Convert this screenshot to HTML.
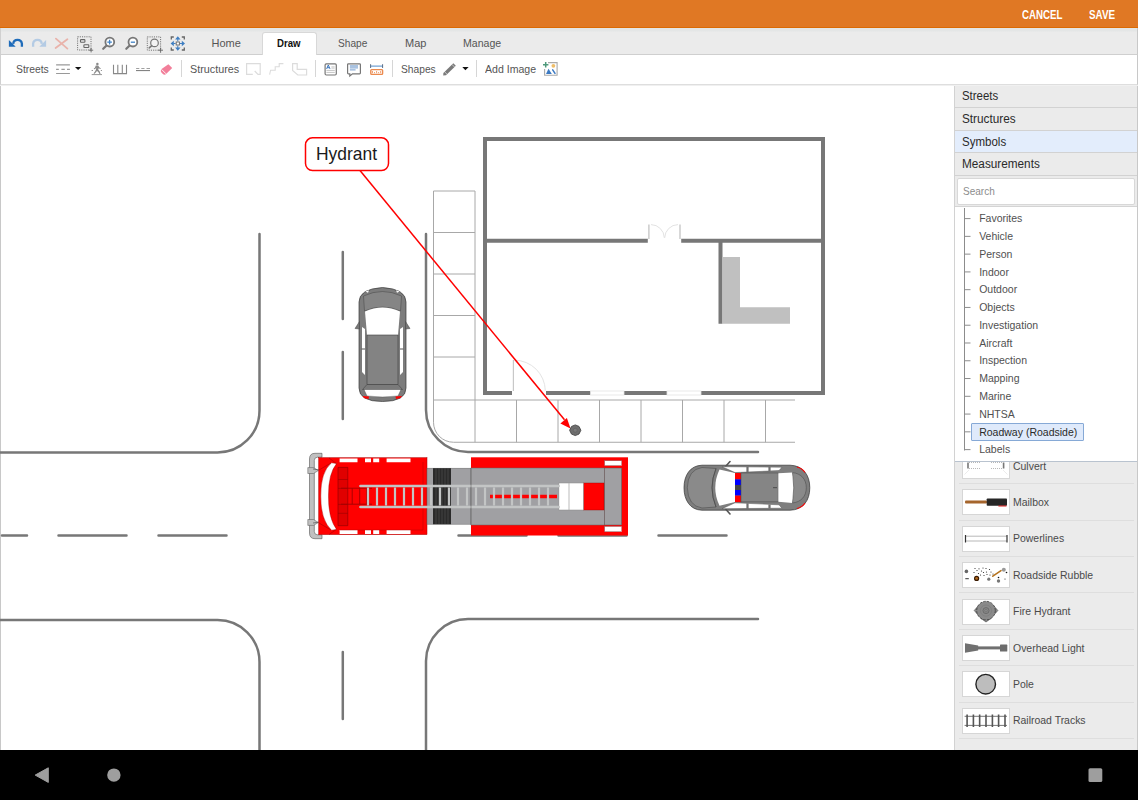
<!DOCTYPE html>
<html><head><meta charset="utf-8">
<style>
*{box-sizing:border-box}
html,body{margin:0;padding:0;width:1138px;height:800px;overflow:hidden;background:#fff;font-family:"Liberation Sans",sans-serif}
.abs{position:absolute}
#topbar{position:absolute;left:0;top:0;width:1138px;height:28px;background:#e07824;border-bottom:1.2px solid #dc6a02}
#topbar .btn{position:absolute;color:#fff;font-weight:bold;font-size:12px;line-height:12px;top:8.6px}
#tabbar{position:absolute;left:0;top:28px;width:1138px;height:27px;background:linear-gradient(#e4e6e6 0,#e4e6e6 3px,#ebebeb 4px);border-bottom:1px solid #cfcfcf;border-left:1px solid #d0d0d0;border-right:1px solid #c8c8c8}
.tab{position:absolute;font-size:11px;line-height:11px;color:#555;top:9.7px}
#drawtab{position:absolute;left:260.5px;top:4px;width:55px;height:23px;background:#fff;border:1px solid #d8d8d8;border-bottom:none;border-radius:3px 3px 0 0}
#toolbar{position:absolute;left:0;top:55px;width:1138px;height:30px;background:#fff;border-bottom:1px solid #dedede;box-shadow:0 1px 0 #f0f0f0;z-index:1;border-left:1px solid #d0d0d0;border-right:1px solid #c8c8c8}
.tl{position:absolute;font-size:11px;line-height:11px;color:#555;top:8.7px}
.sep{position:absolute;top:5px;width:1px;height:17px;background:#d6d6d6}
#canvas{position:absolute;left:0;top:85px;width:954px;height:665px;background:#fff;border-left:1px solid #c8c8c8}
#panel{position:absolute;left:954px;top:85px;width:184px;height:665px;background:#ebebeb;border-left:1px solid #d2d2d2;border-right:1px solid #c8c8c8}
.hdr{position:absolute;left:955px;width:182px;border-bottom:1px solid #d2d2d2;background:#ebebeb}
.hdr span{position:absolute;left:7.2px;font-size:12px;line-height:12px;color:#2a2a2a}
#searchwrap{position:absolute;left:955px;top:176px;width:182px;height:31px;background:#ebebeb;border-bottom:1px solid #d4d4d4}
#search{position:absolute;left:2px;top:2px;width:177.5px;height:26.5px;background:#fff;border:1px solid #d8d8d8;border-radius:2px}
#search span{position:absolute;left:5px;top:7px;font-size:11px;line-height:11px;color:#8c8c8c;transform:scaleX(.91);transform-origin:0 0}
#tree{position:absolute;left:955px;top:206px;width:182px;height:256px;background:#fff;border-top:1px solid #d4d4d4;border-bottom:1px solid #b9c3cf}
.ti{position:absolute;left:24.2px;font-size:10.5px;line-height:10.5px;color:#505050;margin-top:-207px}
#hl{position:absolute;left:16.25px;top:216.25px;width:112.5px;height:17.8px;background:#dfeafb;border:1px solid #86a9d6;border-radius:1px}
.lsep{position:absolute;left:958.5px;width:175px;height:1px;background:#dedede}
.thumb{position:absolute;left:962.3px;width:47.4px;height:26px;background:#fff;border:1px solid #d6d6d6}
.li{position:absolute;left:1013.2px;font-size:11px;line-height:11px;color:#4a4a4a;transform:scaleX(.95);transform-origin:0 0}
#navbar{position:absolute;left:0;top:750px;width:1138px;height:50px;background:#000}
</style></head><body>
<div id="topbar">
  <span class="btn" style="left:1022.4px;transform:scaleX(.81);transform-origin:0 0">CANCEL</span>
  <span class="btn" style="left:1089.3px;transform:scaleX(.82);transform-origin:0 0">SAVE</span>
</div>
<div id="tabbar">
  <div id="drawtab"></div>
  <span class="tab" style="left:210.5px">Home</span>
  <span class="tab" style="left:276px;color:#111;font-weight:bold;transform:scaleX(.875);transform-origin:0 0">Draw</span>
  <span class="tab" style="left:336.5px;transform:scaleX(.92);transform-origin:0 0">Shape</span>
  <span class="tab" style="left:404px">Map</span>
  <span class="tab" style="left:462.2px;transform:scaleX(.96);transform-origin:0 0">Manage</span>
</div>
<div id="toolbar">
  <span class="tl" style="left:14.5px;transform:scaleX(.94);transform-origin:0 0">Streets</span>
  <div class="sep" style="left:180px"></div>
  <span class="tl" style="left:189px;transform:scaleX(.98);transform-origin:0 0">Structures</span>
  <div class="sep" style="left:314px"></div>
  <div class="sep" style="left:391px"></div>
  <span class="tl" style="left:400px;transform:scaleX(.93);transform-origin:0 0">Shapes</span>
  <div class="sep" style="left:475px"></div>
  <span class="tl" style="left:484.4px;transform:scaleX(.96);transform-origin:0 0">Add Image</span>
</div>
<svg width="600" height="57" viewBox="0 28 600 57" style="position:absolute;left:0;top:28px;z-index:2">
<!-- undo -->
<path d="M13.2 43.8A4.4 4.4 0 0 1 21.9 43.6V46.8" fill="none" stroke="#1f6cba" stroke-width="2.3"/>
<path d="M8.9 40.1V46.8H15.7Z" fill="#1f6cba"/>
<!-- redo -->
<path d="M41.8 43.8A4.4 4.4 0 0 0 33.1 43.6V46.8" fill="none" stroke="#b4cbe4" stroke-width="2.3"/>
<path d="M46.1 40.1V46.8H39.3Z" fill="#b4cbe4"/>
<!-- x -->
<path d="M55.9 38.6L67.4 48.6M67.4 39.2L55.6 48" stroke="#e9b3ab" stroke-width="1.8" stroke-linecap="round"/>
<!-- select -->
<rect x="77.6" y="36.8" width="13.4" height="13.2" fill="none" stroke="#666" stroke-width="0.9" stroke-dasharray="1.1 1.1"/>
<rect x="80.5" y="39.6" width="4.4" height="2.7" rx="0.6" fill="none" stroke="#666" stroke-width="1.1"/>
<rect x="83.9" y="44.8" width="4.9" height="2.7" rx="0.6" fill="none" stroke="#666" stroke-width="1.1"/>
<path d="M89 50.2H93.2M91.1 48V52.4" stroke="#666" stroke-width="0.9"/>
<!-- zoom in -->
<circle cx="109.8" cy="42.1" r="4.4" fill="#fff" stroke="#777" stroke-width="1.8"/>
<path d="M106.3 45.8L103.2 48.8" stroke="#777" stroke-width="2.2" stroke-linecap="round"/>
<path d="M109.6 39.8V44.6M107.3 42.2H111.9" stroke="#3f82c6" stroke-width="1.3"/>
<!-- zoom out -->
<circle cx="132.9" cy="42.1" r="4.4" fill="#fff" stroke="#777" stroke-width="1.8"/>
<path d="M129.4 45.8L126.3 48.8" stroke="#777" stroke-width="2.2" stroke-linecap="round"/>
<path d="M130.8 42.2H135" stroke="#3f82c6" stroke-width="1.3"/>
<!-- zoom rect -->
<rect x="147.3" y="36.9" width="13.3" height="13.3" fill="none" stroke="#666" stroke-width="0.9" stroke-dasharray="1.1 1.1"/>
<circle cx="154.5" cy="42.9" r="3.8" fill="#f4f4f4" stroke="#777" stroke-width="1.2"/>
<path d="M151.8 45.6L149.2 47.9" stroke="#777" stroke-width="1.5" stroke-linecap="round"/>
<path d="M158.2 50.2H163M160.6 47.8V52.8" stroke="#666" stroke-width="0.9"/>
<!-- fit -->
<path d="M171.3 39.5V37H173.8M181.8 37H184.3V39.5M184.3 47.5V50H181.8M173.8 50H171.3V47.5" fill="none" stroke="#666" stroke-width="1.3"/>
<path d="M177.8 36.2L180.5 39.4H175.1Z M177.8 50.8L180.5 47.6H175.1Z M170.6 43.5L173.8 40.8V46.2Z M185 43.5L181.8 40.8V46.2Z" fill="#3f7fc2"/>
<path d="M177.8 39V41.3M177.8 45.7V48M173.3 43.5H175.6M180 43.5H182.3" stroke="#3f7fc2" stroke-width="1"/>
<rect x="176.2" y="42" width="3.2" height="3" fill="#fff" stroke="#666" stroke-width="0.9"/>
<!-- row 2: dashed road -->
<path d="M56.1 64.8H69.9M56.1 73.5H69.9" stroke="#999" stroke-width="1.2"/>
<path d="M56.1 69.4H58.8M61.4 69.4H64.8M67 69.4H69.9" stroke="#999" stroke-width="1.1"/>
<path d="M75 67H81.3L78.1 70Z" fill="#111"/>
<!-- pedestrian -->
<g fill="#8a8a8a">
<circle cx="97.4" cy="63.9" r="1.25"/>
<path d="M95.8 65.6L98.2 65.4L99.3 67.3L100.9 68.4L100.4 69.1L98.6 68.3L98.3 69.8L99.6 71.3L100.6 73.9L99.5 74.1L98.3 71.9L97 70.9L95.8 72.6L94.2 73.9L93.6 73.2L95 71.6L96 69.4L96.2 67.6L95.3 68.9L94 69.3L93.8 68.6L94.9 67.8Z"/>
</g>
<path d="M91.7 74.6H102M91.6 70.5H93M100.8 70.5H102" stroke="#8a8a8a" stroke-width="0.9"/>
<!-- pillars -->
<path d="M113.5 64.8V73.6H126.5V64.8M117.8 64.8V73.6M122.3 64.8V73.6" fill="none" stroke="#888" stroke-width="1.1"/>
<!-- dashes -->
<path d="M136.1 68.5H139.3M141.3 68.5H144.5M146.5 68.5H150" stroke="#888" stroke-width="0.8"/>
<path d="M136 70.6H150" stroke="#777" stroke-width="1"/>
<!-- eraser -->
<path d="M168.4 64.2L172.2 68L166.4 73.8Q164.5 75.6 162.6 73.8L161.6 72.8Q159.8 70.9 161.6 69Z" fill="#f27f9a"/>
<path d="M161.8 69.6L166 73.8" stroke="#fff" stroke-width="0.9"/>
<!-- structures icons -->
<path d="M252.8 74.4H246.6V63.6H260.2V74.4H258L254.7 71" fill="none" stroke="#dcdcdc" stroke-width="1.2"/>
<path d="M269.6 74.6L270.6 70.2H275.2V66.8H279.2V63.6H283.4" fill="none" stroke="#dcdcdc" stroke-width="1.1"/>
<path d="M292.6 63.7H297.2V69.4H306.6V75H297.8L292.6 70.4Z" fill="none" stroke="#dcdcdc" stroke-width="1.2"/>
<!-- textbox -->
<rect x="325.1" y="63.8" width="11.2" height="11.2" rx="1.2" fill="#fff" stroke="#777" stroke-width="1.2"/>
<path d="M326.6 68.9L328.3 65L330 68.9M327.2 67.7H329.4" fill="none" stroke="#3a76bd" stroke-width="1"/>
<rect x="331.4" y="66" width="3.2" height="3" fill="#ddd"/>
<path d="M326.4 70.4H334.8M326.4 72.4H334.8" stroke="#aaa" stroke-width="0.7"/>
<!-- comment -->
<path d="M348.4 63.8H359.6Q360.4 63.8 360.4 64.6V73Q360.4 73.8 359.6 73.8H352.5L349.8 76V73.8H348.4Q347.6 73.8 347.6 73V64.6Q347.6 63.8 348.4 63.8Z" fill="#fff" stroke="#777" stroke-width="1.2"/>
<path d="M349.9 66H358M349.9 67.9H358M349.9 69.8H355.6" stroke="#8fb0d8" stroke-width="1.3"/>
<!-- ruler -->
<path d="M370.6 66.1H382.6" stroke="#4f8ac8" stroke-width="1"/>
<path d="M370.6 64.2V68M382.6 64.2V68" stroke="#4a5f7a" stroke-width="0.9"/>
<rect x="370.8" y="69.6" width="11.8" height="4.8" rx="0.8" fill="#fff" stroke="#eb8a4e" stroke-width="1.4"/>
<path d="M372.5 71V73.2M374.5 72V73.2M376.6 71V73.2M378.6 72V73.2M380.6 71V73.2" stroke="#eb8a4e" stroke-width="0.8"/>
<!-- pencil -->
<path d="M453.3 63.2L455.8 65.7L446 75.3L443.2 75.5L443.4 72.9Z" fill="#7a7a7a"/>
<path d="M452 64.5L454.5 67M444.6 71.8L447 74.2" stroke="#fff" stroke-width="0.6"/>
<path d="M462.3 67.1H468.6L465.4 70.2Z" fill="#111"/>
<!-- image -->
<path d="M548 62.6H557.1V75.2H544.6V69" fill="none" stroke="#aaa" stroke-width="1.1"/>
<path d="M545.7 62V67.4M543 64.7H548.4" stroke="#4f9a7c" stroke-width="1.5"/>
<circle cx="553.4" cy="65.8" r="1.9" fill="#efbe6a"/>
<path d="M546 73.9L548.5 68.8L551.8 73.9Z" fill="#3b79c2"/>
<path d="M552.7 69.8L555 73.4" stroke="#3b79c2" stroke-width="1.5" stroke-linecap="round"/>
</svg>
<div id="canvas"><svg width="954" height="665" viewBox="0 85 954 665" style="position:absolute;left:-1px;top:0">
<g fill="none" stroke="#777" stroke-width="2.5" stroke-linecap="round">
<path d="M259.5 234V410.5A42 42 0 0 1 217.5 452.5H0"/>
<path d="M426 234V410A42 42 0 0 0 468 452H758"/>
<path d="M0 620H217.5A42 42 0 0 1 259.5 662V752"/>
<path d="M758 619H468A42 42 0 0 0 426 661V752"/>
</g>
<g fill="none" stroke="#777" stroke-width="2.5" stroke-linecap="round">
<path d="M342.8 252V319M342.8 352V419M342.8 652V719"/>
<path d="M2 535.5H27M58.5 535.5H126.5M158.5 535.5H226.5M458.5 535.5H526.5M558.5 535.5H626.5M658.5 535.5H726.5"/>
</g>
<g fill="none" stroke="#a8a8a8" stroke-width="1">
<path d="M433.5 191H475V400H795M433.5 191V422.25A20 20 0 0 0 453.5 442.25H795"/>
<path d="M433.5 232.5H475M433.5 274H475M433.5 315.5H475M433.5 357H475M433.5 400H475"/>
<path d="M516.5 400V442.25M558 400V442.25M599.5 400V442.25M641 400V442.25M682.5 400V442.25M724 400V442.25M765.5 400V442.25M475 400V442.25"/>
</g>
<g fill="none" stroke="#777" stroke-width="4">
<rect x="485" y="139" width="338" height="254"/>
<path d="M487 240.75H648M681 240.75H821M720.5 242.5V323.75"/>
</g>
<path d="M722.5 257H740V307.25H790V323.75H722.5Z" fill="#c0c0c0"/>
<rect x="512" y="389" width="34" height="8" fill="#fff"/>
<rect x="647.8" y="237" width="33.4" height="6" fill="#fff"/>
<g fill="none" stroke="#c8c8c8" stroke-width="1.2">
<path d="M513.4 391V360"/>
<path d="M514.5 360.2A31 31 0 0 1 545.3 390.5" stroke="#dcdcdc" stroke-width="0.8"/>
<path d="M648.9 239V224.4M680 239V224.4" stroke-width="1.4"/>
<path d="M651 224.6A13.5 13.5 0 0 1 664.3 237.8M678 224.6A13.5 13.5 0 0 0 664.7 237.8" stroke="#dadada" stroke-width="0.8"/>
</g>
<rect x="590.5" y="391" width="33.5" height="4" fill="#fff" stroke="#e4e4e4" stroke-width="0.8"/>
<rect x="667" y="391" width="34" height="4" fill="#fff" stroke="#e4e4e4" stroke-width="0.8"/>
<!-- callout -->
<path d="M360 170.6L564.5 419.8" stroke="#f00" stroke-width="1.5" fill="none"/>
<path d="M570.5 428.5L560.4 423.4L566.9 418.1Z" fill="#f00"/>
<rect x="305.5" y="137.8" width="83" height="32.8" rx="7" fill="#fff" stroke="#f00" stroke-width="1.5"/>
<text x="316" y="160" font-family="Liberation Sans" font-size="19" fill="#1a1a1a" textLength="61" lengthAdjust="spacingAndGlyphs">Hydrant</text>
<path d="M569.6 430.25L571.5 426.4L575.25 424.9L579 426.4L580.9 430.25L579 434.1L575.25 435.6L571.5 434.1Z" fill="#6e6e6e" stroke="#3a3a3a" stroke-width="0.8"/>
<circle cx="575.25" cy="430.25" r="2" fill="#7a7a7a" stroke="#5a5a5a" stroke-width="0.5"/>
<g id="suv" stroke-linejoin="round">
<path d="M359 302Q359 289 382.5 287.5Q406 289 406 302V388Q406 401.5 382.5 401.5Q359 401.5 359 388Z" fill="#7c7c7c" stroke="#3a3a3a" stroke-width="0.7"/>
<path d="M355 328.5L359.5 321.5V329Z M410 328.5L405.5 321.5V329Z" fill="#777" stroke="#444" stroke-width="0.5"/>
<path d="M363.5 296Q382.5 287 401.5 296L400.5 311Q382.5 303 364.5 311Z" fill="#858585" stroke="#444" stroke-width="0.5"/>
<path d="M365 311.5Q382.5 303.5 400 311.5L398 335H367Z" fill="#fff"/>
<path d="M365.5 291.5L369 290.3L368 292.8Z M399.5 291.5L396 290.3L397 292.8Z" fill="#fff"/>
<rect x="367" y="335" width="31" height="49.5" fill="#838383" stroke="#3e3e3e" stroke-width="0.6"/>
<path d="M362 327L365 329V375L362 372Z M403 327L400 329V375L403 372Z" fill="#fff"/>
<path d="M361.5 349H365 M400 349H403.5" stroke="#555" stroke-width="1"/>
<path d="M367 384.5H398L402.5 389.5H362.5Z" fill="#7a7a7a" stroke="#3e3e3e" stroke-width="0.5"/>
<path d="M364 389.5H401L398 396Q382.5 398 367 396Z" fill="#fff" stroke="#444" stroke-width="0.4"/>
<path d="M362.5 396L369 396.5L368.5 399L364 398Z M402 396L395.5 396.5L396 399L400.5 398Z" fill="#f00"/>
</g>
<g id="police" stroke-linejoin="round">
<path d="M702 465.2H790C803 465.5 809.8 475 809.8 487.7C809.8 500.5 803 510 790 510.2H702C690 510 684 500 684 487.7C684 475.5 690 465.5 702 465.2Z" fill="#7e7e7e" stroke="#333" stroke-width="0.7"/>
<path d="M725.8 466.2L730 461.5M725.8 509.2L730 514" stroke="#555" stroke-width="1.6" stroke-linecap="round"/>
<path d="M702 467.5Q688 469.5 687.3 487.7Q688 506 702 508L716 507Q708 487.7 716 468.5Z" fill="#8a8a8a" stroke="#444" stroke-width="0.5"/>
<path d="M719.5 469.5Q711 487.7 719.5 505.8L735 502V473Z" fill="#fff"/>
<path d="M716 468.5Q708 487.7 716 507" fill="none" stroke="#444" stroke-width="0.6"/>
<path d="M722 466.7L782 467.2L779 470.6L735 472.6Z M722 508.7L782 508.2L779 504.8L735 502.8Z" fill="#fff" stroke="#555" stroke-width="0.5"/>
<path d="M747.5 466.5V472M747.5 503.2V509M769.5 466.8V471M769.5 504.4V508.6" stroke="#707070" stroke-width="2.2"/>
<rect x="735" y="473" width="6" height="6.4" fill="#f00"/>
<rect x="735" y="479.4" width="6" height="5.6" fill="#00f"/>
<rect x="735" y="485" width="6" height="5" fill="#444"/>
<rect x="735" y="490" width="6" height="5.6" fill="#00f"/>
<rect x="735" y="495.6" width="6" height="6.5" fill="#f00"/>
<rect x="741" y="473" width="37.3" height="28.8" fill="#858585" stroke="#444" stroke-width="0.5"/>
<path d="M778.3 473.2L792.5 472.6Q795 487.7 792.5 503L778.3 501.7Z" fill="#fff"/>
<path d="M792.5 472.6C801 473.5 806.3 479 806.3 487.7C806.3 496.5 801 502 792.5 503Q795 487.7 792.5 472.6Z" fill="#8a8a8a" stroke="#444" stroke-width="0.5"/>
<path d="M797 467Q802.5 468.5 805 472.5M797 508.5Q802.5 507 805 503" stroke="#f00" stroke-width="1.1" fill="none"/>
<path d="M773 487.6H777" stroke="#555" stroke-width="1.2"/>
</g>
<g id="truck">
<path d="M322 453.3H315Q309.5 453.3 309.5 459V533Q309.5 538.7 315 538.7H322V534.8H317.5Q314.3 534.8 314.3 531.5V460.5Q314.3 457.2 317.5 457.2H322Z" fill="#c0c0c0" stroke="#555" stroke-width="0.6"/>
<path d="M307.8 467.6H313.5L318.4 470.5L313.5 473.5H307.8Z" fill="#c0c0c0" stroke="#555" stroke-width="0.5"/>
<path d="M307.8 519.5H313.5L318.4 522.5L313.5 525.4H307.8Z" fill="#c0c0c0" stroke="#555" stroke-width="0.5"/>
<path d="M313 469L320 470M313 523L320 522" stroke="#444" stroke-width="0.6"/>
<rect x="318.7" y="457.7" width="108.3" height="76.9" fill="#f00" stroke="#a00" stroke-width="0.5"/>
<path d="M331.5 462.8L336.5 463.6Q328.2 474 328.5 496Q328.2 518 336.5 529.4L331.5 530.2Q320.5 520 320.8 496Q320.5 472 331.5 462.8Z" fill="#fff" stroke="#900" stroke-width="0.4"/>
<path d="M319 470L331 463M319 523L331 530M329 458L336.5 463.6M329 534.5L336.5 529.4" stroke="#900" stroke-width="0.5"/>
<path d="M339.6 458.4H357.5V462.2H339.6Z M365 458.4H371V462.2H365Z M373.2 458.4H379.2V462.2H373.2Z M386.6 458.4H410.5V462.2H386.6Z M339.6 530H357.5V533.9H339.6Z M365 530H371V533.9H365Z M373.2 530H379.2V533.9H373.2Z M386.6 530H410.5V533.9H386.6Z" fill="#fff"/>
<path d="M338 467.4H347.8V525.7H338Z" fill="#e00000" stroke="#800" stroke-width="0.6"/>
<path d="M338 479.5H347.8M338 488.4H347.8M338 504.4H347.8M338 513.3H347.8" stroke="#900" stroke-width="0.6"/>
<path d="M423 462V530H340" fill="none" stroke="#b00" stroke-width="0.5"/>
<rect x="427" y="468.2" width="44" height="56" fill="#a0a0a3" stroke="#666" stroke-width="0.5"/>
<rect x="433" y="468.2" width="18" height="56" fill="#2a2a2a"/>
<path d="M436 468V524M439 468V524M442 468V524M445 468V524M448 468V524" stroke="#555" stroke-width="0.6"/>
<rect x="471" y="457.3" width="157" height="78.2" fill="#f00"/>
<rect x="471" y="468" width="133.3" height="57" fill="#a0a0a3" stroke="#666" stroke-width="0.5"/>
<rect x="604.3" y="468" width="17.4" height="57" fill="#a0a0a3" stroke="#555" stroke-width="0.5"/>
<rect x="604.7" y="460.8" width="17" height="4.8" fill="#fff" stroke="#777" stroke-width="0.4"/>
<rect x="604.7" y="526.5" width="17" height="5.2" fill="#fff" stroke="#777" stroke-width="0.4"/>
<rect x="583.4" y="483" width="20.6" height="27" fill="#f00" stroke="#900" stroke-width="0.4"/>
<rect x="558.9" y="483" width="24.5" height="27" fill="#fff" stroke="#888" stroke-width="0.5"/>
<path d="M569 483V510" stroke="#aaa" stroke-width="0.8"/>
<path d="M341 488.2H372M341 504.2H372M352.2 488.2V504.2M359.7 488.2V504.2M366.7 488.2V504.2" stroke="#a00000" stroke-width="0.9" fill="none"/>
<path d="M490 496.5H557" stroke="#f00" stroke-width="3.4"/>
<path d="M368 487.5V505.5M377 487.5V505.5M386 487.5V505.5M395 487.5V505.5M404 487.5V505.5M413 487.5V505.5M422 487.5V505.5M431 487.5V505.5M440 487.5V505.5M449 487.5V505.5M458 487.5V505.5M467 487.5V505.5M476 487.5V505.5M485 487.5V505.5M494 487.5V505.5M503 487.5V505.5M512 487.5V505.5M521 487.5V505.5M530 487.5V505.5M539 487.5V505.5M548 487.5V505.5" stroke="#c3c5c5" stroke-width="2.2"/>
<path d="M360.5 486H558.6M360.5 507H558.6" stroke="#c3c5c5" stroke-width="2.7" stroke-linecap="round"/>
<path d="M471 468V525" stroke="#777" stroke-width="0.7"/>
</g>
</svg></div>
<div id="panel"></div>
<div class="hdr" style="top:85px;height:23px"><span style="top:4.7px;transform:scaleX(.95);transform-origin:0 0">Streets</span></div>
<div class="hdr" style="top:108px;height:23px"><span style="top:4.7px;transform:scaleX(.98);transform-origin:0 0">Structures</span></div>
<div class="hdr" style="top:131px;height:22px;background:#e3edfc"><span style="top:4.5px;transform:scaleX(.96);transform-origin:0 0">Symbols</span></div>
<div class="hdr" style="top:153px;height:23px"><span style="top:4.5px;transform:scaleX(.98);transform-origin:0 0">Measurements</span></div>
<div id="searchwrap"><div id="search"><span>Search</span></div></div>
<div class="lsep" style="top:447px"></div>
<div class="lsep" style="top:483.4px"></div>
<div class="lsep" style="top:519.5px"></div>
<div class="lsep" style="top:555.6px"></div>
<div class="lsep" style="top:592.3px"></div>
<div class="lsep" style="top:628.9px"></div>
<div class="lsep" style="top:665px"></div>
<div class="lsep" style="top:701.5px"></div>
<div class="lsep" style="top:738.3px"></div>
<div class="thumb" style="top:453px" id="th_culvert"></div>
<span class="li" style="top:460.69px">Culvert</span>
<div class="thumb" style="top:489.3px" id="th_mailbox"></div>
<span class="li" style="top:496.99px">Mailbox</span>
<div class="thumb" style="top:525.5px" id="th_powerlines"></div>
<span class="li" style="top:533.19px">Powerlines</span>
<div class="thumb" style="top:562px" id="th_roadside"></div>
<span class="li" style="top:569.69px">Roadside Rubble</span>
<div class="thumb" style="top:598.5px" id="th_fire"></div>
<span class="li" style="top:606.19px">Fire Hydrant</span>
<div class="thumb" style="top:635px" id="th_overhead"></div>
<span class="li" style="top:642.69px">Overhead Light</span>
<div class="thumb" style="top:671.4px" id="th_pole"></div>
<span class="li" style="top:679.09px">Pole</span>
<div class="thumb" style="top:707.5px" id="th_railroad"></div>
<span class="li" style="top:715.19px">Railroad Tracks</span>

<svg width="183" height="310" viewBox="955 440 183 310" style="position:absolute;left:955px;top:440px">
<!-- culvert -->
<g>
<path d="M968 462.5V468.5M1003.6 462.5V468.5" stroke="#777" stroke-width="1.6"/>
<path d="M969 462.5H981M991 462.5H1003M969 468.5H981M991 468.5H1003" stroke="#999" stroke-width="0.7" stroke-dasharray="1 1"/>
<path d="M969 470L964.5 474.5M1003 470L1007.5 474.5" stroke="#ddd" stroke-width="0.6"/>
</g>
<!-- mailbox -->
<rect x="965" y="500.4" width="22" height="3.2" rx="1" fill="#a5652c"/>
<rect x="986.7" y="498.4" width="20.3" height="7.3" rx="0.8" fill="#262626"/>
<path d="M998.4 506H1006.5" stroke="#d00" stroke-width="0.9"/>
<!-- powerlines -->
<path d="M965.5 536.2H1007M965.5 541H1007" stroke="#888" stroke-width="0.6"/>
<path d="M965.5 535V542.5M1007 535V542.5" stroke="#333" stroke-width="1.2"/>
<!-- rubble -->
<g fill="#2a2a2a">
<circle cx="966.4" cy="571.4" r="1.8" fill="#666"/>
<rect x="965.3" y="578.2" width="3.5" height="1" fill="#333"/>
<circle cx="976.6" cy="578.4" r="2.6" fill="#3a1a00"/>
<circle cx="976.6" cy="578.4" r="1.4" fill="#b06a20"/>
<circle cx="988.8" cy="579.2" r="1.6" fill="#777"/>
<circle cx="1003.8" cy="569.8" r="2" fill="#999"/>
<circle cx="998.5" cy="581" r="1.7" fill="#777"/>
<circle cx="1006.5" cy="572.5" r="0.8" fill="#111"/>
<circle cx="998.5" cy="577.5" r="0.8" fill="#111"/>
<circle cx="1005" cy="579" r="0.6" fill="#222"/>
<circle cx="974" cy="572.5" r="0.6"/><circle cx="975" cy="568.5" r="0.6"/><circle cx="977" cy="570.5" r="0.6"/><circle cx="979" cy="568.8" r="0.6"/><circle cx="978.5" cy="573.5" r="0.6"/><circle cx="980.5" cy="575" r="0.6"/><circle cx="981.5" cy="571" r="0.6"/><circle cx="983" cy="568" r="0.6"/><circle cx="983.5" cy="572.5" r="0.6"/><circle cx="984" cy="575.5" r="0.6"/><circle cx="986" cy="568.5" r="0.6"/><circle cx="986.5" cy="572" r="0.6"/><circle cx="987" cy="574.5" r="0.6"/><circle cx="989.5" cy="569.5" r="0.6"/><circle cx="991" cy="572" r="0.6"/><circle cx="990" cy="575" r="0.6"/><circle cx="993" cy="574" r="0.6"/>
</g>
<path d="M992.8 576.2L1001 570.6" stroke="#b5731e" stroke-width="1.6" stroke-linecap="round"/>
<!-- hydrant -->
<path d="M974.2 610.5L978.5 605.5V615.5Z M997.9 610.5L993.5 605.5V615.5Z M981 618.5H991L986 622Z" fill="#8a8a8a" stroke="#333" stroke-width="0.5"/>
<circle cx="986" cy="610.6" r="9.3" fill="#8a8a8a" stroke="#3a3a3a" stroke-width="0.8" stroke-dasharray="2.5 1.2"/>
<circle cx="986" cy="610.6" r="5.6" fill="none" stroke="#7a7a7a" stroke-width="0.6"/>
<circle cx="986" cy="610.6" r="3" fill="none" stroke="#555" stroke-width="0.6"/>
<circle cx="986" cy="610.6" r="1.4" fill="none" stroke="#666" stroke-width="0.5"/>
<!-- overhead light -->
<path d="M965 643.2L978.2 645.5V650.5L965 652.7Z" fill="#707070"/>
<rect x="977.5" y="646.4" width="23" height="3" fill="#707070"/>
<rect x="1000" y="644.6" width="7.3" height="7" rx="0.6" fill="#6c6c6c"/>
<!-- pole -->
<circle cx="985.7" cy="684.2" r="9.8" fill="#bdbdbd" stroke="#222" stroke-width="1.4"/>
<!-- railroad -->
<path d="M964.6 716.3H1007M964.6 725.4H1007" stroke="#666" stroke-width="0.9"/>
<path d="M967.1 714.5V727M973.4 714.5V727M979.65 714.5V727M986 714.5V727M992.4 714.5V727M998.6 714.5V727M1005 714.5V727" stroke="#555" stroke-width="1.6"/>
</svg>
<div id="tree">
<svg width="183" height="256" viewBox="955 206 183 256" style="position:absolute;left:0;top:0"><path d="M964.5 207V449.5" stroke="#8c8c8c" stroke-width="1" fill="none"/><path d="M964.5 217.60H970.5M964.5 235.37H970.5M964.5 253.14H970.5M964.5 270.91H970.5M964.5 288.68H970.5M964.5 306.45H970.5M964.5 324.22H970.5M964.5 341.99H970.5M964.5 359.76H970.5M964.5 377.53H970.5M964.5 395.30H970.5M964.5 413.07H970.5M964.5 430.84H970.5M964.5 448.61H970.5" stroke="#8c8c8c" stroke-width="1" fill="none"/></svg>
<div id="hl"></div>
<span class="ti" style="top:213.28px">Favorites</span>
<span class="ti" style="top:231.05px">Vehicle</span>
<span class="ti" style="top:248.82px">Person</span>
<span class="ti" style="top:266.59px">Indoor</span>
<span class="ti" style="top:284.36px">Outdoor</span>
<span class="ti" style="top:302.13px">Objects</span>
<span class="ti" style="top:319.90px">Investigation</span>
<span class="ti" style="top:337.67px">Aircraft</span>
<span class="ti" style="top:355.44px">Inspection</span>
<span class="ti" style="top:373.21px">Mapping</span>
<span class="ti" style="top:390.98px">Marine</span>
<span class="ti" style="top:408.75px">NHTSA</span>
<span class="ti" style="top:426.52px;color:#2a2a2a">Roadway (Roadside)</span>
<span class="ti" style="top:444.29px">Labels</span>
</div>
<div id="navbar"><svg width="1138" height="50" viewBox="0 750 1138 50" style="position:absolute;left:0;top:0">
<path d="M35.2 775.1L48.3 767.8V782.4Z" fill="#9e9e9e" stroke="#9e9e9e" stroke-width="1" stroke-linejoin="round"/>
<circle cx="113.9" cy="775.1" r="6.7" fill="#9e9e9e"/>
<rect x="1088.5" y="768.2" width="13.8" height="13.8" rx="1.6" fill="#9e9e9e"/>
</svg></div>
</body></html>
